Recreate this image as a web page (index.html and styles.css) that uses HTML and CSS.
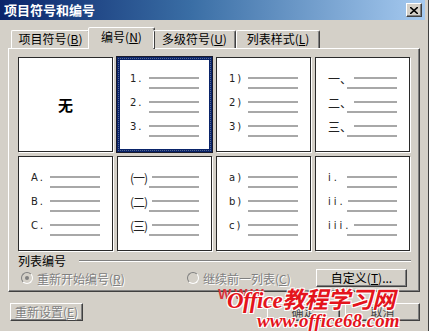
FILE: index.html
```html
<!DOCTYPE html>
<html lang="zh-CN">
<head>
<meta charset="UTF-8">
<title>项目符号和编号</title>
<link rel="stylesheet" href="styles.css">
</head>
<body>
<div class="dialog">
    <div class="titlebar">
        <span class="title">项目符号和编号</span>
        <span class="close">
            <svg width="8" height="7" viewBox="0 0 8 7"><path d="M0 0L8 7M8 0L0 7" stroke="#000" stroke-width="1.6"/></svg>
        </span>
    </div>

    <div class="tabs">
        <div class="tab t1">项目符号(<u>B</u>)</div>
        <div class="tab t2 active">编号(<u>N</u>)</div>
        <div class="tab t3">多级符号(<u>U</u>)</div>
        <div class="tab t4">列表样式(<u>L</u>)</div>
    </div>

    <div class="panel">
        <div class="grid">
            <div class="cell none">无</div>

            <div class="cell sel">
                <div class="item"><span class="num">1.</span><span class="rule"></span></div><div class="cont"></div>
                <div class="item"><span class="num">2.</span><span class="rule"></span></div><div class="cont"></div>
                <div class="item"><span class="num">3.</span><span class="rule"></span></div><div class="cont"></div>
            </div>

            <div class="cell">
                <div class="item"><span class="num">1)</span><span class="rule"></span></div><div class="cont"></div>
                <div class="item"><span class="num">2)</span><span class="rule"></span></div><div class="cont"></div>
                <div class="item"><span class="num">3)</span><span class="rule"></span></div><div class="cont"></div>
            </div>

            <div class="cell">
                <div class="item"><span class="num cjk">一、</span><span class="rule"></span></div><div class="cont"></div>
                <div class="item"><span class="num cjk">二、</span><span class="rule"></span></div><div class="cont"></div>
                <div class="item"><span class="num cjk">三、</span><span class="rule"></span></div><div class="cont"></div>
            </div>

            <div class="cell">
                <div class="item"><span class="num">A.</span><span class="rule"></span></div><div class="cont"></div>
                <div class="item"><span class="num">B.</span><span class="rule"></span></div><div class="cont"></div>
                <div class="item"><span class="num">C.</span><span class="rule"></span></div><div class="cont"></div>
            </div>

            <div class="cell">
                <div class="item"><span class="num cjk paren">(一)</span><span class="rule"></span></div><div class="cont"></div>
                <div class="item"><span class="num cjk paren">(二)</span><span class="rule"></span></div><div class="cont"></div>
                <div class="item"><span class="num cjk paren">(三)</span><span class="rule"></span></div><div class="cont"></div>
            </div>

            <div class="cell">
                <div class="item"><span class="num">a)</span><span class="rule"></span></div><div class="cont"></div>
                <div class="item"><span class="num">b)</span><span class="rule"></span></div><div class="cont"></div>
                <div class="item"><span class="num">c)</span><span class="rule"></span></div><div class="cont"></div>
            </div>

            <div class="cell">
                <div class="item"><span class="num roman">i.</span><span class="rule"></span></div><div class="cont"></div>
                <div class="item"><span class="num roman">ii.</span><span class="rule"></span></div><div class="cont"></div>
                <div class="item"><span class="num roman">iii.</span><span class="rule"></span></div><div class="cont"></div>
            </div>
        </div>

        <div class="group-label">
            <span>列表编号</span>
            <span class="groove"></span>
        </div>

        <div class="radio-row">
            <div class="opt opt1"><span class="radio checked"></span><span class="dis">重新开始编号(<u>R</u>)</span></div>
            <div class="opt"><span class="radio"></span><span class="dis">继续前一列表(<u>C</u>)</span></div>
            <button class="btn custom">自定义(<u>T</u>)...</button>
        </div>
    </div>

    <div class="footer">
        <button class="btn reset dis">重新设置(<u>E</u>)</button>
        <button class="btn ok">确定</button>
        <button class="btn cancel">取消</button>
    </div>

    <div class="watermark">
        <div class="wm-back">WWW.</div>
        <div class="wm-title">Office教程学习网</div>
        <div class="wm-url">www.office68.com</div>
    </div>
</div>
</body>
</html>
```

FILE: styles.css
```css
* {
    box-sizing: border-box;
}

body {
    margin: 0;
    background-color: #d4d0c8;
    font-family: "Noto Sans CJK SC", "Liberation Sans", sans-serif;
    font-size: 12px;
    color: #000;
}

.dialog {
    position: relative;
    width: 429px;
    height: 331px;
    padding-right: 3px;
    background-color: #d4d0c8;
    border-right: 1px solid #404040;
    overflow: hidden;
}

.titlebar {
    display: flex;
    align-items: center;
    justify-content: space-between;
    height: 20px;
    padding: 0 3px 0 4px;
    background: linear-gradient(to right, #0a246a, #3a6ea5 45%, #a6caf0);
}

.title {
    color: #fff;
    font-weight: bold;
    font-size: 13px;
    line-height: 20px;
}

.close {
    display: flex;
    align-items: center;
    justify-content: center;
    width: 16px;
    height: 14px;
    background-color: #d4d0c8;
    border: 1px solid;
    border-color: #fff #404040 #404040 #fff;
    box-shadow: inset -1px -1px #808080;
}

/* tabs */
.tabs {
    display: flex;
    align-items: flex-end;
    height: 21px;
    margin: 7px 0 0 11px;
    position: relative;
    z-index: 1;
}

.tab {
    height: 18px;
    line-height: 16px;
    text-align: center;
    border: 1px solid;
    border-bottom: none;
    border-color: #fff #404040 transparent #fff;
    box-shadow: inset -1px 0 #808080;
    border-radius: 2px 2px 0 0;
    font-size: 12px;
}

.t1 { width: 79px; }
.t2 { width: 67px; }
.t3 { width: 83px; }
.t4 { width: 84px; }

.tab.active {
    height: 22px;
    margin: 0 -2px -1px;
    line-height: 18px;
    background-color: #d4d0c8;
}

/* main panel */
.panel {
    width: 412px;
    height: 244px;
    margin-left: 8px;
    padding: 8px 0 0 9px;
    border: 1px solid;
    border-color: #fff #404040 #404040 #fff;
    box-shadow: inset -1px -1px #808080;
}

.grid {
    display: grid;
    grid-template-columns: repeat(4, 95px);
    grid-auto-rows: 95px;
    gap: 4px;
}

.cell {
    background-color: #fff;
    border: 1px solid #2a2a2a;
    padding: 14px 12px 0 12px;
    box-shadow: 1px 1px 0 #fff;
}

.cell.none {
    display: flex;
    align-items: center;
    justify-content: center;
    padding: 0;
    font-size: 15px;
    font-weight: bold;
}

.cell.sel {
    border: 3px solid #0a246a;
    outline: 1px dotted #5a6a90;
    outline-offset: -2px;
    box-shadow: 0 0 0 1px #1a1a2a;
    padding: 12px 10px 0 10px;
}

.item {
    display: flex;
    align-items: center;
    height: 12px;
}

.num {
    min-width: 19px;
    padding-right: 2px;
    font-family: "DejaVu Sans", sans-serif;
    font-size: 10px;
    letter-spacing: 2px;
    color: #222;
    white-space: nowrap;
}

.num.cjk {
    font-family: "Noto Sans CJK SC", sans-serif;
    font-size: 12px;
    letter-spacing: 0;
}

.num.paren {
    padding-right: 5px;
    letter-spacing: -1px;
}

.num.roman {
    letter-spacing: 3px;
}

.rule {
    flex: 1;
    height: 2px;
    background-color: #a8a8a8;
}

.cont {
    height: 2px;
    margin: 3px 0 7px 19px;
    background-color: #a8a8a8;
}

/* list numbering group */
.group-label {
    display: flex;
    align-items: center;
    height: 14px;
    margin-top: 3px;
    line-height: 14px;
}

.groove {
    width: 332px;
    height: 2px;
    margin-left: 13px;
    border-top: 1px solid #808080;
    border-bottom: 1px solid #fff;
}

.radio-row {
    display: flex;
    align-items: center;
    height: 18px;
    margin-top: 1px;
    padding-left: 3px;
}

.opt {
    display: flex;
    align-items: center;
    gap: 4px;
}

.opt1 {
    width: 166px;
}

.radio {
    position: relative;
    width: 12px;
    height: 12px;
    border-radius: 50%;
    border: 1px solid;
    border-color: #808080 #fff #fff #808080;
    background-color: #d4d0c8;
}

.radio.checked::after {
    content: "";
    position: absolute;
    left: 3px;
    top: 3px;
    width: 4px;
    height: 4px;
    border-radius: 50%;
    background-color: #808080;
}

.dis {
    color: #808080;
    text-shadow: 1px 1px 0 #fff;
}

.btn {
    height: 18px;
    padding: 0;
    font-family: "Noto Sans CJK SC", sans-serif;
    font-size: 12px;
    line-height: 14px;
    background-color: #d4d0c8;
    border: 1px solid;
    border-color: #fff #404040 #404040 #fff;
    box-shadow: inset -1px -1px #808080;
}

.custom {
    width: 91px;
    margin-left: auto;
    margin-right: 12px;
}

.footer {
    display: flex;
    margin: 11px 0 0 10px;
}

.reset { width: 73px; }

.ok {
    width: 73px;
    margin-left: 184px;
    color: #444;
}

.cancel {
    width: 75px;
    margin-left: 5px;
    color: #444;
}

/* site watermark stamped over the screenshot */
.watermark {
    position: absolute;
    left: 216px;
    top: 284px;
    width: 210px;
    height: 47px;
    font-weight: bold;
    color: #e4141c;
}

.wm-back {
    position: absolute;
    left: 2px;
    top: 2px;
    font-family: "Liberation Sans", sans-serif;
    font-size: 14px;
    letter-spacing: 3px;
    color: #d8343a;
}

.wm-title {
    position: absolute;
    left: 11px;
    top: 4px;
    font-family: "Liberation Serif", "Noto Sans CJK SC", serif;
    font-style: italic;
    font-size: 23px;
    line-height: 25px;
    letter-spacing: -0.5px;
    white-space: nowrap;
    text-shadow: -1px -1px 0 #fff, 1px -1px 0 #fff, -1px 1px 0 #fff, 1px 1px 0 #fff;
}

.wm-url {
    position: absolute;
    left: 41px;
    top: 27px;
    font-family: "Liberation Serif", serif;
    font-style: italic;
    font-size: 19px;
    line-height: 19px;
    white-space: nowrap;
    text-shadow: -1px -1px 0 #fff, 1px -1px 0 #fff, -1px 1px 0 #fff, 1px 1px 0 #fff;
}
```
